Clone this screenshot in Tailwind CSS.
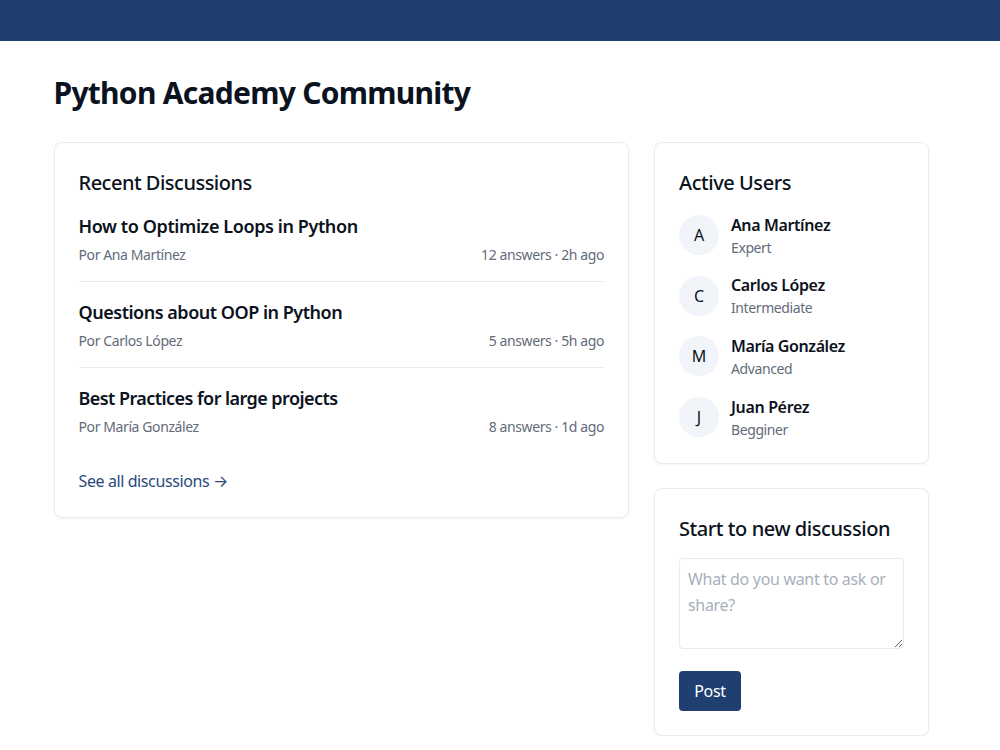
<!DOCTYPE html>
<html lang="en">
<head>
    <meta charset="UTF-8">
    <title>Python Academy Community</title>
    <script src="https://cdn.jsdelivr.net/npm/@tailwindcss/browser@4"></script>
</head>
<body class="bg-white font-['Noto_Sans',sans-serif] text-[#0b1220] overflow-hidden">
<header class="h-[40.5px] bg-[#1e3f70]"></header>
<main class="px-[53.5px] pt-[31px]">
    <h1 class="text-3xl font-bold leading-[41px] mb-[29.5px] tracking-[-0.73px]">Python Academy Community</h1>
    <div class="flex items-start gap-[25px] w-[875.5px]">
        <section class="flex-1 bg-white border border-[#e8ecf1] rounded-lg shadow-xs p-6">
            <h2 class="text-xl font-medium leading-8 mb-[13px] tracking-[-0.5px]">Recent Discussions</h2>
            <div class="border-b border-[#e8ecf1] pb-[15px] mb-4">
                <h3 class="text-lg font-semibold leading-[29px] mb-[3px] tracking-[-0.4px]">How to Optimize Loops in Python</h3>
                <div class="flex justify-between text-sm text-[#636b79] leading-[22px] tracking-[-0.4px]"><span>Por Ana Martínez</span><span>12 answers · 2h ago</span></div>
            </div>
            <div class="border-b border-[#e8ecf1] pb-[15px] mb-4">
                <h3 class="text-lg font-semibold leading-[29px] mb-[3px] tracking-[-0.48px]">Questions about OOP in Python</h3>
                <div class="flex justify-between text-sm text-[#636b79] leading-[22px] tracking-[-0.4px]"><span>Por Carlos López</span><span>5 answers · 5h ago</span></div>
            </div>
            <div class="pb-[15px] mb-4">
                <h3 class="text-lg font-semibold leading-[29px] mb-[3px] tracking-[-0.56px]">Best Practices for large projects</h3>
                <div class="flex justify-between text-sm text-[#636b79] leading-[22px] tracking-[-0.4px]"><span>Por María González</span><span>8 answers · 1d ago</span></div>
            </div>
            <a href="#" class="block text-[#294a7c] leading-6 tracking-[-0.4px]">See all discussions <span class="font-['Inter',sans-serif]">→</span></a>
        </section>
        <aside class="w-[275px] flex flex-col gap-6">
            <section class="bg-white border border-[#e8ecf1] rounded-lg shadow-xs p-6">
                <h2 class="text-xl font-medium leading-8 mb-[13.5px] tracking-[-0.45px]">Active Users</h2>
                <div class="flex flex-col gap-4">
                    <div class="flex items-center gap-3"><div class="w-10 h-10 rounded-full bg-[#f1f5f9] flex items-center justify-center">A</div><div><div class="font-semibold leading-6 tracking-[-0.38px]">Ana Martínez</div><div class="mt-px text-sm text-[#636b79] leading-[19.67px] tracking-[-0.4px]">Expert</div></div></div>
                    <div class="flex items-center gap-3"><div class="w-10 h-10 rounded-full bg-[#f1f5f9] flex items-center justify-center">C</div><div><div class="font-semibold leading-6 tracking-[-0.4px]">Carlos López</div><div class="mt-px text-sm text-[#636b79] leading-[19.67px] tracking-[-0.4px]">Intermediate</div></div></div>
                    <div class="flex items-center gap-3"><div class="w-10 h-10 rounded-full bg-[#f1f5f9] flex items-center justify-center">M</div><div><div class="font-semibold leading-6 tracking-[-0.4px]">María González</div><div class="mt-px text-sm text-[#636b79] leading-[19.67px] tracking-[-0.4px]">Advanced</div></div></div>
                    <div class="flex items-center gap-3"><div class="w-10 h-10 rounded-full bg-[#f1f5f9] flex items-center justify-center">J</div><div><div class="font-semibold leading-6 tracking-[-0.35px]">Juan Pérez</div><div class="mt-px text-sm text-[#636b79] leading-[19.67px] tracking-[-0.4px]">Begginer</div></div></div>
                </div>
            </section>
            <section class="bg-white border border-[#e8ecf1] rounded-lg shadow-xs p-6">
                <h2 class="text-xl font-medium leading-8 mb-[13px] tracking-[-0.43px]">Start to new discussion</h2>
                <textarea rows="3" placeholder="What do you want to ask or share?" class="block w-full h-[91px] border border-[#e8ecf1] rounded p-2 mb-[22px] leading-[25.6px] tracking-[-0.32px] placeholder:text-[#a8afbc]"></textarea>
                <button class="bg-[#1e3f70] text-white rounded w-[62px] h-10 tracking-[-0.3px]">Post</button>
            </section>
        </aside>
    </div>
</main>
</body>
</html>
